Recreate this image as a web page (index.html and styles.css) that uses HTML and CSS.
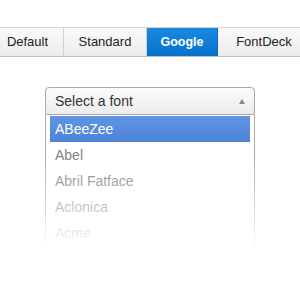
FILE: index.html
```html
<!DOCTYPE html>
<html lang="en">
<head>
    <meta charset="UTF-8">
    <title>Font picker</title>
    <link rel="stylesheet" href="styles.css">
</head>
<body>
    <nav class="tabs">
        <a class="tab tab-default">Default</a>
        <a class="tab tab-standard">Standard</a>
        <a class="tab tab-google active">Google</a>
        <a class="tab tab-fontdeck">FontDeck</a>
    </nav>
    <div class="picker">
        <div class="chosen">
            <div class="chosen-single">
                <span>Select a font</span>
                <b class="arrow"></b>
            </div>
            <div class="chosen-drop">
                <ul class="chosen-results">
                    <li class="highlighted">ABeeZee</li>
                    <li>Abel</li>
                    <li>Abril Fatface</li>
                    <li>Aclonica</li>
                    <li>Acme</li>
                </ul>
                <div class="fade"></div>
            </div>
        </div>
    </div>
</body>
</html>
```

FILE: styles.css
```css
body {
    margin: 0;
    background: #ffffff;
    font-family: 'Liberation Sans', Arial, sans-serif;
    color: #333;
    overflow: hidden;
}

.tabs {
    display: flex;
    margin-top: 27px;
    margin-left: -8px;
    width: 320px;
    border-top: 1px solid #d4d4d4;
    border-bottom: 1px solid #c4c4c4;
    background: linear-gradient(#fafafa, #ececec);
}

.tab {
    flex: none;
    height: 28px;
    line-height: 28px;
    text-align: center;
    font-size: 13px;
    color: #222;
    border-right: 1px solid #d0d0d0;
}

.tab-default { width: 71px; }
.tab-standard { width: 82px; }
.tab-google { width: 70px; }
.tab-fontdeck { width: 92px; border-right: none; }

.tab.active {
    background: linear-gradient(#1a8ae0, #0570cc);
    color: #fff;
    font-weight: bold;
    font-size: 12.5px;
    border-right-color: #0a66b5;
}

.picker {
    padding: 30px 0 0 45px;
}

.chosen {
    width: 210px;
    font-size: 14px;
}

.chosen-single {
    position: relative;
    height: 26px;
    line-height: 26px;
    padding-left: 9px;
    border: 1px solid #aaa;
    border-radius: 4px 4px 0 0;
    background: linear-gradient(#fbfbfb, #ececec);
    color: #333;
}

.arrow {
    position: absolute;
    right: 9px;
    top: 11px;
    border-left: 3px solid transparent;
    border-right: 3px solid transparent;
    border-bottom: 5px solid #888;
}

.chosen-drop {
    position: relative;
    border: 1px solid #aaa;
    border-top: none;
    height: 150px;
}

.chosen-results {
    list-style: none;
    margin: 0 4px 0 0;
    padding: 1px 0 0 4px;
}

.chosen-results li {
    height: 26px;
    line-height: 26px;
    padding-left: 5px;
    color: #808080;
}

.chosen-results li.highlighted {
    background: linear-gradient(#6194e2, #4c82d8);
    color: #fff;
}

.fade {
    position: absolute;
    left: -2px;
    right: -2px;
    top: 40px;
    bottom: -2px;
    background: linear-gradient(rgba(255, 255, 255, 0), #fff 85%);
}
```
